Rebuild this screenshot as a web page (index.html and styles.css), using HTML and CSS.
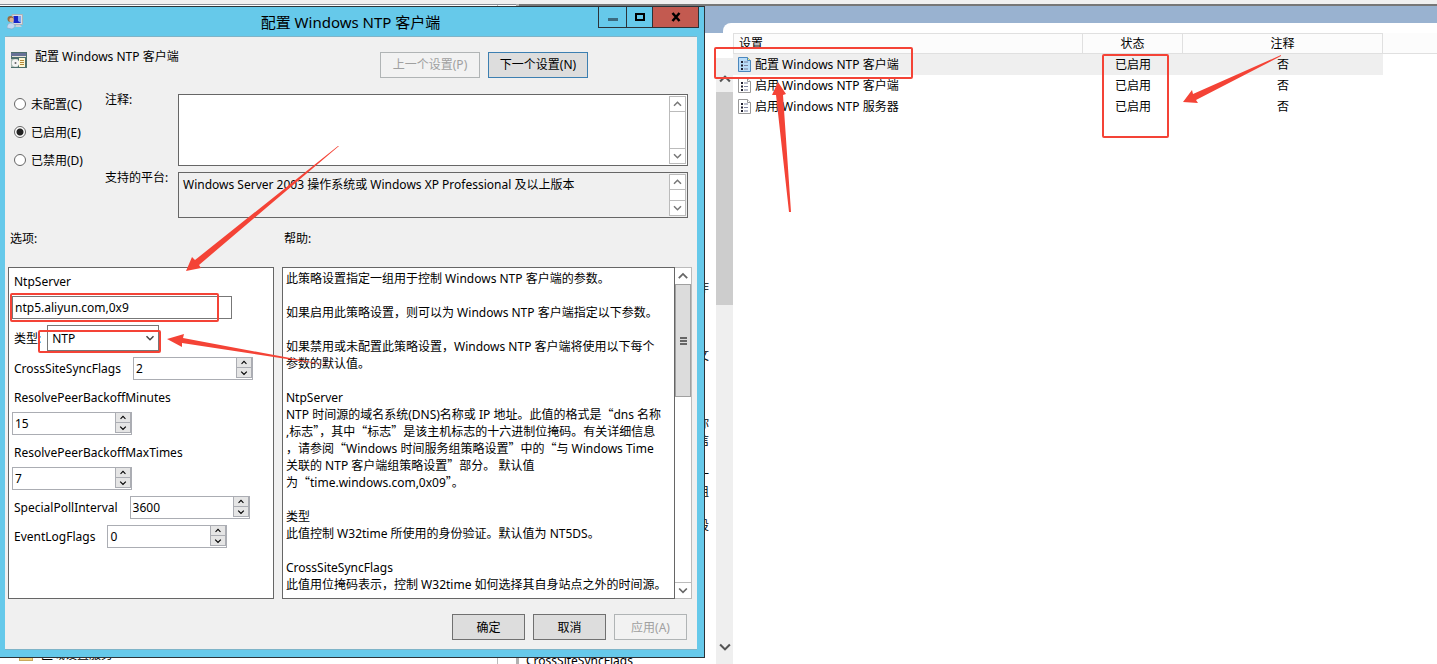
FILE: index.html
```
<!DOCTYPE html>
<html lang="zh-CN">
<head>
    <meta charset="UTF-8">
    <meta name="viewport" content="width=device-width, initial-scale=1.0">
    <title>配置 Windows NTP 客户端</title>
    <link rel="stylesheet" href="styles.css">
</head>
<body>
    <svg class="sprite" aria-hidden="true">
        <symbol id="up" viewBox="0 0 10 10"><path d="M1.5 6.8 5 3.3l3.5 3.5" fill="none" stroke="currentColor" stroke-width="1.5"/></symbol>
        <symbol id="down" viewBox="0 0 10 10"><path d="M1.5 3.2 5 6.7l3.5-3.5" fill="none" stroke="currentColor" stroke-width="1.5"/></symbol>
        <symbol id="setting" viewBox="0 0 13 15">
            <path d="M.5.5h9l3 3v11H.5z" fill="var(--sheet, #fff)" stroke="var(--edge, #999)"/>
            <path d="M9.5.5v3h3" fill="var(--fold, #fff)" stroke="var(--edge, #999)"/>
            <path d="M3 4h2v2H3zM3 7.5h2v2H3zM3 11h2v2H3z" fill="#223"/>
            <path d="M6 5h4M6 8.5h4M6 12h4" stroke="#7d82a0"/>
        </symbol>
    </svg>

    <div class="console">
        <div class="toolbar-edge"></div>
        <div class="panes">
            <div class="tree-pane">
                <div class="tree-item"><span class="folder"></span>区域设置服务</div>
            </div>
            <div class="splitter"></div>
            <div class="detail-pane">
                <div class="band"></div>
                <div class="detail-body">
                    <div class="description">
                        <div class="lines">
                            <p>作</p><p></p><p></p><p></p><p>文</p><p></p><p></p><p></p><p>你</p><p>信</p><p></p><p>一</p><p>组</p><p></p><p>设</p>
                        </div>
                        <p class="next-line">CrossSiteSyncFlags</p>
                    </div>
                    <div class="page-scroll">
                        <div class="corner"></div>
                        <div class="track">
                            <button type="button" aria-label="向上滚动"><svg><use href="#up"/></svg></button>
                            <div class="page-thumb"></div>
                            <button type="button" class="last" aria-label="向下滚动"><svg><use href="#down"/></svg></button>
                        </div>
                    </div>
                    <div class="list">
                        <table>
                            <colgroup><col class="col-name"><col class="col-state"><col class="col-note"><col></colgroup>
                            <thead>
                                <tr><th>设置</th><th>状态</th><th>注释</th><th></th></tr>
                            </thead>
                            <tbody>
                                <tr class="selected"><td><svg class="setting-icon"><use href="#setting"/></svg><span>配置 Windows NTP 客户端</span></td><td>已启用</td><td>否</td><td></td></tr>
                                <tr><td><svg class="setting-icon"><use href="#setting"/></svg><span>启用 Windows NTP 客户端</span></td><td>已启用</td><td>否</td><td></td></tr>
                                <tr><td><svg class="setting-icon"><use href="#setting"/></svg><span>启用 Windows NTP 服务器</span></td><td>已启用</td><td>否</td><td></td></tr>
                            </tbody>
                        </table>
                    </div>
                </div>
            </div>
        </div>
    </div>

    <div class="dialog" role="dialog" aria-labelledby="dialog-title">
        <div class="titlebar">
            <svg class="app-icon" viewBox="0 0 16 16">
                <path d="M5 .5h10.5v10H5z" fill="#d8dce2" stroke="#aab0b8"/>
                <path d="M6.500 2h7.500v7H6.500z" fill="#1724c8"/>
                <path d="M11 2h3v7l-3-2z" fill="#7fa4ee"/>
                <path d="M9 11h4l2 2H8z" fill="#c9ced6"/>
                <circle cx="3.500" cy="5" r="3" fill="#9c6b3c"/>
                <circle cx="4.500" cy="6" r="2.200" fill="#e0b48a"/>
                <path d="M0 14c0-4 2-5 4-5s4 1 4 4l-3 2z" fill="#c4d8ee" stroke="#7f9dbd" stroke-width=".5"/>
            </svg>
            <h1 id="dialog-title">配置 Windows NTP 客户端</h1>
            <div class="window-buttons">
                <button type="button" class="minimize" aria-label="最小化"><svg viewBox="0 0 12 10"><path d="M1 6h10v3H1z" fill="#3b6b80"/></svg></button>
                <button type="button" class="maximize" aria-label="最大化"><svg viewBox="0 0 12 10"><path d="M2 2h8v6H2z" fill="none" stroke="#000" stroke-width="2"/></svg></button>
                <button type="button" class="close" aria-label="关闭"><svg viewBox="0 0 12 10"><path d="M2.500 1 9.500 9M9.500 1 2.500 9" stroke="#000" stroke-width="2.500"/></svg></button>
            </div>
        </div>

        <form class="content">
            <div class="heading">
                <svg class="policy-icon" viewBox="0 0 16 16">
                    <path d="M0 0h16v16H0z" fill="#4d6f6c"/>
                    <path d="M0 1h15v3H0z" fill="#667196"/>
                    <path d="M1 4h14v1H1z" fill="#e4e4d8"/>
                    <path d="M0 7h7v8H0z" fill="#a8b8b0"/>
                    <circle cx="4.500" cy="11" r="3.700" fill="#f4f4f4"/>
                    <circle cx="4.500" cy="11" r="1" fill="#666"/>
                    <path d="M8 6h6v9H8z" fill="#fff7d2"/>
                    <path d="M9 8.500h4M9 10.500h4M9 12.500h4" stroke="#b2883a"/>
                </svg>
                <span class="name">配置 Windows NTP 客户端</span>
                <button type="button" class="button wide" disabled>上一个设置(P)</button>
                <button type="button" class="button wide default">下一个设置(N)</button>
            </div>

            <div class="state">
                <div class="radios">
                    <label><input type="radio" name="state">未配置(C)</label>
                    <label><input type="radio" name="state" checked>已启用(E)</label>
                    <label><input type="radio" name="state">已禁用(D)</label>
                </div>
                <div class="fields">
                    <label for="comment">注释:</label>
                    <div class="box comment">
                        <textarea id="comment"></textarea>
                        <div class="scroll"><svg><use href="#up"/></svg><svg><use href="#down"/></svg></div>
                    </div>
                    <label for="platform">支持的平台:</label>
                    <div class="box platform">
                        <textarea id="platform" readonly>Windows Server 2003 操作系统或 Windows XP Professional 及以上版本</textarea>
                        <div class="scroll"><svg><use href="#up"/></svg><svg><use href="#down"/></svg></div>
                    </div>
                </div>
            </div>

            <div class="columns">
                <h2>选项:</h2>
                <h2>帮助:</h2>
                <div class="options">
                    <label for="server">NtpServer</label>
                    <input type="text" class="server" id="server" value="ntp5.aliyun.com,0x9">
                    <div class="option type">
                        <label for="type">类型:</label>
                        <span class="select"><select id="type"><option>NTP</option></select><svg><use href="#down"/></svg></span>
                    </div>
                    <div class="option">
                        <label for="flags">CrossSiteSyncFlags</label>
                        <span class="spin"><input type="text" id="flags" value="2"><span class="arrows"><svg><use href="#up"/></svg><svg><use href="#down"/></svg></span></span>
                    </div>
                    <div class="option stacked">
                        <label for="minutes">ResolvePeerBackoffMinutes</label>
                        <span class="spin"><input type="text" id="minutes" value="15"><span class="arrows"><svg><use href="#up"/></svg><svg><use href="#down"/></svg></span></span>
                    </div>
                    <div class="option stacked">
                        <label for="times">ResolvePeerBackoffMaxTimes</label>
                        <span class="spin"><input type="text" id="times" value="7"><span class="arrows"><svg><use href="#up"/></svg><svg><use href="#down"/></svg></span></span>
                    </div>
                    <div class="option">
                        <label for="poll">SpecialPollInterval</label>
                        <span class="spin"><input type="text" id="poll" value="3600"><span class="arrows"><svg><use href="#up"/></svg><svg><use href="#down"/></svg></span></span>
                    </div>
                    <div class="option">
                        <label for="log">EventLogFlags</label>
                        <span class="spin"><input type="text" id="log" value="0"><span class="arrows"><svg><use href="#up"/></svg><svg><use href="#down"/></svg></span></span>
                    </div>
                </div>
                <div class="help">
                    <div class="help-text">
                        <p>此策略设置指定一组用于控制 Windows NTP 客户端的参数。</p>
                        <p>如果启用此策略设置，则可以为 Windows NTP 客户端指定以下参数。</p>
                        <p>如果禁用或未配置此策略设置，Windows NTP 客户端将使用以下每个<br>参数的默认值。</p>
                        <p>NtpServer<br>NTP 时间源的域名系统(DNS)名称或 IP 地址。此值的格式是<span class="quote">“</span>dns 名称<br>,标志<span class="quote">”</span>，其中<span class="quote">“</span>标志<span class="quote">”</span>是该主机标志的十六进制位掩码。有关详细信息<br>，请参阅<span class="quote">“</span>Windows 时间服务组策略设置<span class="quote">”</span>中的<span class="quote">“</span>与 Windows Time<br>关联的 NTP 客户端组策略设置<span class="quote">”</span>部分。 默认值<br>为<span class="quote">“</span>time.windows.com,0x09<span class="quote">”</span>。</p>
                        <p>类型<br>此值控制 W32time 所使用的身份验证。默认值为 NT5DS。</p>
                        <p>CrossSiteSyncFlags<br>此值用位掩码表示，控制 W32time 如何选择其自身站点之外的时间源。</p>
                    </div>
                    <div class="help-scroll">
                        <svg><use href="#up"/></svg>
                        <div class="help-thumb"></div>
                        <svg class="last"><use href="#down"/></svg>
                    </div>
                </div>
            </div>

            <div class="actions">
                <button type="button" class="button">确定</button>
                <button type="button" class="button">取消</button>
                <button type="button" class="button" disabled>应用(A)</button>
            </div>
        </form>
    </div>

    <svg class="marks" viewBox="0 0 1437 664" aria-hidden="true">
        <g fill="none" stroke="#f44336" stroke-width="2">
            <rect x="715" y="48" width="197" height="30" rx="1"/>
            <rect x="1103" y="55" width="65" height="82" rx="1"/>
            <rect x="11" y="294" width="207" height="27" rx="1"/>
            <rect x="39" y="331" width="121" height="21" rx="1"/>
        </g>
        <g fill="#f44336">
            <path d="M339 146 199 265l2 3-15 3 6-14 3 3L338 146z"/>
            <path d="M333 366 182 343v4l-15-8 17-5-1 4z"/>
            <path d="M789 212 776 95h-4l6-13 8 12-3 1 8 117z"/>
            <path d="M1281 56 1196 100l2 3-15-1 9-12 1 4 88-39z"/>
        </g>
    </svg>
</body>
</html>
```
FILE: styles.css
```
* {
    box-sizing: border-box;
}
body {
    margin: 0;
    height: 100vh;
    overflow: hidden;
    position: relative;
    background: #fff;
    color: #000;
    font: 12px/17px "Noto Sans", "Noto Sans CJK SC", sans-serif;
}
p, h1, h2 {
    margin: 0;
    font-size: 12px;
    font-weight: normal;
}
button, input, select, textarea {
    font: inherit;
    color: inherit;
    margin: 0;
}
svg {
    display: block;
    width: 10px;
    height: 10px;
    flex: none;
}
.sprite {
    position: absolute;
    width: 0;
    height: 0;
}

/* console behind the dialog */
.console {
    height: 100%;
    display: flex;
    flex-direction: column;
}
.toolbar-edge {
    height: 4px;
    background: #f0f0f0;
}
.panes {
    flex: 1;
    min-height: 0;
    display: flex;
}
.tree-pane {
    width: 516px;
    border-top: 1px solid #868b94;
    display: flex;
    align-items: flex-end;
    background: linear-gradient(#bbb, #bbb) 497px 0 / 1px 100% no-repeat;
}
.tree-item {
    display: flex;
    align-items: center;
    gap: 8px;
    height: 17px;
    margin: 0 0 1px 19px;
}
.folder {
    width: 14px;
    height: 12px;
    background: #f3cf7c;
    border: 1px solid #c9a95c;
}
.splitter {
    width: 3px;
    background: #b0b0b0;
}
.detail-pane {
    flex: 1;
    min-width: 0;
    border-top: 2px solid #777;
    display: flex;
    flex-direction: column;
    background: #99b2d0;
}
.band {
    height: 17px;
}
.detail-body {
    flex: 1;
    min-height: 0;
    display: flex;
}
.description {
    width: 197px;
    margin-top: 10px;
    background: #fff;
    display: flex;
    flex-direction: column;
    justify-content: space-between;
}
.lines {
    padding: 246px 7px 0 0;
    text-align: right;
}
.lines p {
    height: 17px;
}
.next-line {
    height: 12px;
    padding-left: 7px;
}
.page-scroll {
    width: 17px;
    display: flex;
    flex-direction: column;
}
.corner {
    height: 10px;
    margin-left: 7px;
    background: #fff;
    border-radius: 8px 0 0 0;
}
.track {
    flex: 1;
    border-top: 25px solid #fff;
    background: #efefef;
    display: flex;
    flex-direction: column;
}
.track button {
    height: 34px;
    padding: 8px 0 0;
    border: 0;
    background: none;
    color: #555;
    display: flex;
    align-items: center;
    justify-content: center;
}
.track svg {
    width: 14px;
    height: 14px;
    stroke-width: 2px;
}
.track .last {
    margin-top: auto;
    padding: 0;
}
.page-thumb {
    height: 213px;
    background: #cdcdcd;
}
.list {
    flex: 1;
    min-width: 0;
    padding-top: 10px;
    background: #fff;
}
table {
    width: 100%;
    table-layout: fixed;
    border-collapse: separate;
    border-spacing: 0;
}
.col-name {
    width: 350px;
}
.col-state {
    width: 100px;
}
.col-note {
    width: 200px;
}
th {
    height: 21px;
    padding: 0;
    font-weight: normal;
    background: #fcfcfc;
    border: 1px solid #e0e0e0;
    border-left: 0;
}
th:first-child {
    text-align: left;
    padding-left: 5px;
    border-left: 1px solid #e0e0e0;
}
th:last-child {
    border-top: 0;
    border-right: 0;
}
td {
    height: 21px;
    padding: 0;
    text-align: center;
}
td:first-child {
    display: flex;
    align-items: center;
    gap: 4px;
    padding-left: 5px;
}
.selected td:not(:last-child) {
    background: #efefef;
}
.setting-icon {
    width: 13px;
    height: 15px;
}
.selected .setting-icon {
    --sheet: #b9dcf8;
    --edge: #4a87bd;
    --fold: #f2ee7a;
}

/* dialog window */
.dialog {
    position: absolute;
    left: 0;
    top: 6px;
    width: 705px;
    background: #66c9ea;
    border: 1px solid #2b3338;
    border-left: 0;
    padding: 0 7px 7px 5px;
}
.titlebar {
    height: 29px;
    display: flex;
    align-items: center;
}
.app-icon {
    width: 16px;
    height: 16px;
    margin-left: 2px;
}
.titlebar h1 {
    flex: 1;
    padding-left: 80px;
    text-align: center;
    font-size: 15px;
    line-height: 20px;
}
.window-buttons {
    display: flex;
    align-self: flex-start;
}
.window-buttons button {
    height: 21px;
    padding: 0;
    background: none;
    border: 1px solid #2b3338;
    border-top: 0;
    border-right: 0;
    display: flex;
    align-items: center;
    justify-content: center;
}
.window-buttons svg {
    width: 12px;
    height: 10px;
}
.window-buttons .minimize {
    width: 28px;
}
.window-buttons .maximize {
    width: 26px;
}
.window-buttons .close {
    width: 47px;
    margin-right: -2px;
    background: #c35a50;
    border-right: 1px solid #2b3338;
}
.content {
    background: #f0f0f0;
    border: 1px solid #7fb4c8;
    border-left: 0;
    border-right: 0;
    padding: 11px 5px 9px 3px;
}
.button {
    width: 73px;
    height: 26px;
    padding: 0;
    border: 1px solid #707070;
    background: #ddd;
}
.button.wide {
    width: 100px;
}
.button.default {
    border-color: #3c7fb1;
}
.button:disabled {
    color: #a0a0a0;
    background: #f2f2f2;
    border-color: #b0b4b5;
}
.heading {
    display: flex;
    align-items: center;
    gap: 8px;
    padding: 0 104px 0 3px;
}
.policy-icon {
    width: 16px;
    height: 16px;
    margin-bottom: 10px;
}
.heading .name {
    flex: 1;
    padding-bottom: 16px;
}
.state {
    display: flex;
    padding: 13px 4px 0 6px;
}
.radios {
    width: 91px;
    display: flex;
    flex-direction: column;
    gap: 8px;
}
.radios label {
    display: flex;
    align-items: center;
    gap: 5px;
    height: 20px;
}
.radios input {
    appearance: none;
    width: 12px;
    height: 12px;
    border: 1px solid #666;
    border-radius: 50%;
    background: #fff;
}
.radios input:checked {
    background: radial-gradient(circle, #222 0 3px, #fff 4px);
}
.fields {
    flex: 1;
    display: grid;
    grid-template-columns: 73px 1fr;
    row-gap: 6px;
}
.fields label {
    line-height: 12px;
}
.box {
    display: flex;
    background: #fff;
    border: 1px solid #666;
}
.comment {
    height: 72px;
}
.platform {
    height: 46px;
    background: #f0f0f0;
}
.box textarea {
    flex: 1;
    padding: 3px 4px;
    border: 0;
    outline: 0;
    resize: none;
    background: none;
    overflow: hidden;
}
.scroll {
    width: 17px;
    margin: 1px;
    background: #fff;
    border: 1px solid #bbb;
    color: #777;
    display: flex;
    flex-direction: column;
    justify-content: space-between;
}
.scroll svg {
    width: 15px;
    height: 15px;
    padding: 2px;
}
.scroll svg:first-child {
    border-bottom: 1px solid #bbb;
}
.scroll svg:last-child {
    border-top: 1px solid #bbb;
}
.columns {
    display: grid;
    grid-template-columns: 266px 1fr;
    column-gap: 8px;
    padding-top: 12px;
}
.columns h2 {
    height: 37px;
    padding-left: 2px;
}
.options, .help {
    height: 332px;
}
.options {
    background: #fff;
    border: 1px solid #666;
    padding: 5px 3px;
    display: flex;
    flex-direction: column;
    align-items: flex-start;
    gap: 6px;
}
.options label {
    padding-left: 2px;
}
.options input {
    min-width: 0;
    border: 0;
    outline: 0;
    background: none;
    padding: 0 2px;
}
.options .server {
    width: 220px;
    height: 23px;
    border: 1px solid #777;
}
.option {
    display: flex;
    align-items: center;
    gap: 12px;
}
.option.type {
    gap: 6px;
}
.option.stacked {
    flex-direction: column;
    align-items: flex-start;
    gap: 6px;
    padding-top: 3px;
}
.select {
    width: 112px;
    height: 26px;
    border: 1px solid #777;
    display: flex;
    align-items: center;
    padding-right: 3px;
    color: #444;
}
.select select {
    flex: 1;
    appearance: none;
    border: 0;
    padding: 0 4px;
    background: none;
    color: #000;
}
.spin {
    width: 120px;
    height: 23px;
    border: 1px solid #abadb3;
    display: flex;
}
.spin input {
    flex: 1;
}
.arrows {
    width: 16px;
    height: 20px;
    background: #e5e5e5;
    border: 1px solid #abadb3;
    border-top: 0;
    display: flex;
    flex-direction: column;
    align-items: center;
}
.arrows svg {
    width: 14px;
    height: 10px;
    padding: 1px;
}
.arrows svg:first-child {
    border-bottom: 1px solid #abadb3;
}
.help {
    display: flex;
}
.help-text {
    flex: 1;
    background: #fff;
    border: 1px solid #666;
    padding: 2px 3px;
    display: flex;
    flex-direction: column;
    gap: 17px;
    white-space: nowrap;
    overflow: hidden;
}
.quote {
    font-family: "Noto Sans CJK SC", sans-serif;
    line-height: 12px;
}
.help-scroll {
    width: 17px;
    background: #fff;
    border: 1px solid #bbb;
    border-left: 0;
    color: #666;
    display: flex;
    flex-direction: column;
}
.help-scroll svg {
    width: 16px;
    height: 16px;
    padding: 2px;
}
.help-scroll .last {
    margin-top: auto;
    border-top: 1px solid #bbb;
}
.help-thumb {
    height: 113px;
    background: linear-gradient(#666 0 2px, transparent 2px 3px, #666 3px 5px, transparent 5px 6px, #666 6px 8px) center / 7px 8px no-repeat #dcdcdc;
    border: 1px solid #a0a0a0;
}
.actions {
    display: flex;
    justify-content: flex-end;
    gap: 8px;
    padding: 15px 5px 0 0;
}

/* red boxes and arrows */
.marks {
    position: absolute;
    left: 0;
    top: 0;
    width: 1437px;
    height: 664px;
    pointer-events: none;
}
```
